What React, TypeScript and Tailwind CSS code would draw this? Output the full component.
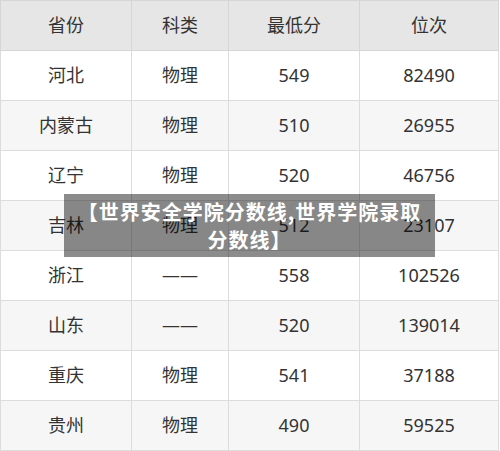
import React from 'react';

const rows = [
    ['河北', '物理', '549', '82490'],
    ['内蒙古', '物理', '510', '26955'],
    ['辽宁', '物理', '520', '46756'],
    ['吉林', '物理', '512', '23107'],
    ['浙江', '——', '558', '102526'],
    ['山东', '——', '520', '139014'],
    ['重庆', '物理', '541', '37188'],
    ['贵州', '物理', '490', '59525'],
];

function App() {
    return (
        <main className="relative w-[500px] h-[451px] bg-white font-['Noto_Sans','Noto_Sans_CJK_SC',sans-serif] text-[#333]">
            <table className="w-[499px] border-collapse text-[18px] text-center">
                <colgroup>
                    <col className="w-[131px]" />
                    <col className="w-[97px]" />
                    <col className="w-[131px]" />
                    <col />
                </colgroup>
                <thead>
                    <tr className="h-[50px] bg-[#e6e6e6]">
                        {['省份', '科类', '最低分', '位次'].map((h) => (
                            <th key={h} className="border border-[#d6d6d6] font-normal">
                                {h}
                            </th>
                        ))}
                    </tr>
                </thead>
                <tbody>
                    {rows.map((r, i) => (
                        <tr key={i} className={`h-[50px] ${i % 2 === 1 ? 'bg-[#f6f6f6]' : 'bg-white'}`}>
                            {r.map((c, j) => (
                                <td key={j} className="border border-[#dcdcdc]">
                                    {c}
                                </td>
                            ))}
                        </tr>
                    ))}
                </tbody>
            </table>
            <div className="absolute left-[64px] top-[194px] w-[371px] h-[63px] bg-black/45 flex flex-col items-center justify-center text-white font-bold text-[20px] leading-[28px] tracking-[1px] font-['Noto_Sans_CJK_SC',sans-serif]">
                <span>【世界安全学院分数线,世界学院录取</span>
                <span>分数线】</span>
            </div>
        </main>
    );
}

export default App;
